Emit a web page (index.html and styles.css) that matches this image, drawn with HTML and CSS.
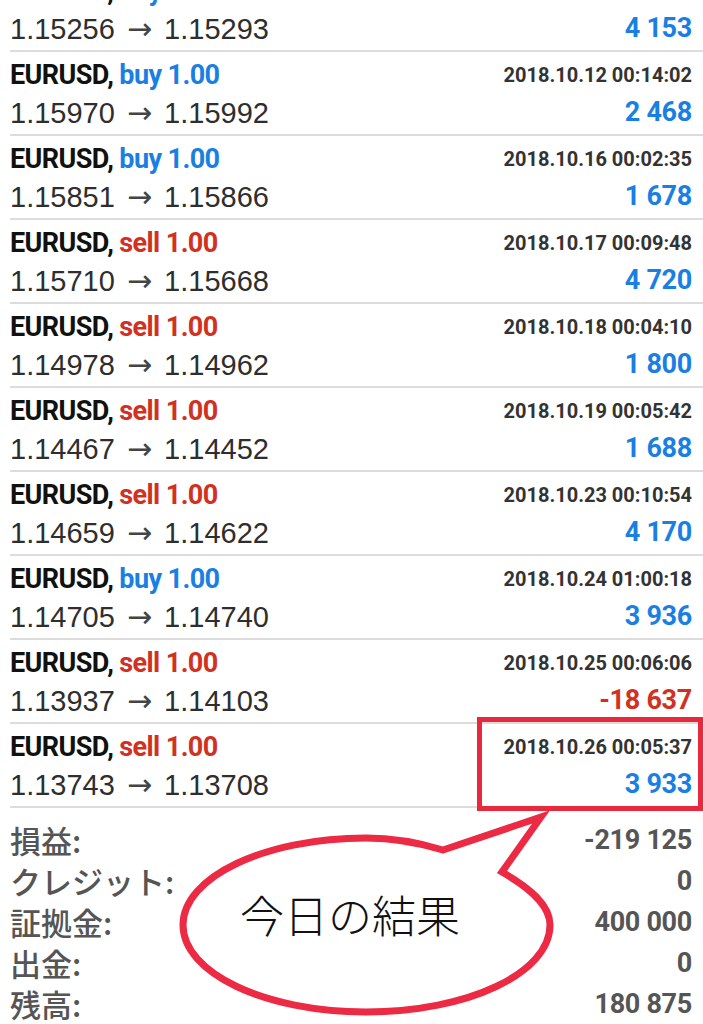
FILE: index.html
```html
<!DOCTYPE html>
<html lang="ja">
<head>
    <meta charset="UTF-8">
    <meta name="viewport" content="width=device-width, initial-scale=1.0">
    <title>History</title>
    <link rel="stylesheet" href="styles.css">
</head>
<body>
    <main class="history">
        <div class="deals">
            <div class="deal">
                <div class="line"><span class="sym">EURUSD, <span class="buy">buy 1.00</span></span><span class="date">2018.10.11 00:10:11</span></div>
                <div class="line"><span class="price">1.15256 <span class="arrow">→</span> 1.15293</span><span class="profit">4 153</span></div>
            </div>
            <div class="deal">
                <div class="line"><span class="sym">EURUSD, <span class="buy">buy 1.00</span></span><span class="date">2018.10.12 00:14:02</span></div>
                <div class="line"><span class="price">1.15970 <span class="arrow">→</span> 1.15992</span><span class="profit">2 468</span></div>
            </div>
            <div class="deal">
                <div class="line"><span class="sym">EURUSD, <span class="buy">buy 1.00</span></span><span class="date">2018.10.16 00:02:35</span></div>
                <div class="line"><span class="price">1.15851 <span class="arrow">→</span> 1.15866</span><span class="profit">1 678</span></div>
            </div>
            <div class="deal">
                <div class="line"><span class="sym">EURUSD, <span class="sell">sell 1.00</span></span><span class="date">2018.10.17 00:09:48</span></div>
                <div class="line"><span class="price">1.15710 <span class="arrow">→</span> 1.15668</span><span class="profit">4 720</span></div>
            </div>
            <div class="deal">
                <div class="line"><span class="sym">EURUSD, <span class="sell">sell 1.00</span></span><span class="date">2018.10.18 00:04:10</span></div>
                <div class="line"><span class="price">1.14978 <span class="arrow">→</span> 1.14962</span><span class="profit">1 800</span></div>
            </div>
            <div class="deal">
                <div class="line"><span class="sym">EURUSD, <span class="sell">sell 1.00</span></span><span class="date">2018.10.19 00:05:42</span></div>
                <div class="line"><span class="price">1.14467 <span class="arrow">→</span> 1.14452</span><span class="profit">1 688</span></div>
            </div>
            <div class="deal">
                <div class="line"><span class="sym">EURUSD, <span class="sell">sell 1.00</span></span><span class="date">2018.10.23 00:10:54</span></div>
                <div class="line"><span class="price">1.14659 <span class="arrow">→</span> 1.14622</span><span class="profit">4 170</span></div>
            </div>
            <div class="deal">
                <div class="line"><span class="sym">EURUSD, <span class="buy">buy 1.00</span></span><span class="date">2018.10.24 01:00:18</span></div>
                <div class="line"><span class="price">1.14705 <span class="arrow">→</span> 1.14740</span><span class="profit">3 936</span></div>
            </div>
            <div class="deal">
                <div class="line"><span class="sym">EURUSD, <span class="sell">sell 1.00</span></span><span class="date">2018.10.25 00:06:06</span></div>
                <div class="line"><span class="price">1.13937 <span class="arrow">→</span> 1.14103</span><span class="profit loss">-18 637</span></div>
            </div>
            <div class="deal">
                <div class="line"><span class="sym">EURUSD, <span class="sell">sell 1.00</span></span><span class="date">2018.10.26 00:05:37</span></div>
                <div class="line"><span class="price">1.13743 <span class="arrow">→</span> 1.13708</span><span class="profit">3 933</span></div>
            </div>
        </div>

        <div class="summary">
            <div class="sum-row"><span class="label">損益:</span><span class="num">-219 125</span></div>
            <div class="sum-row"><span class="label">クレジット:</span><span class="num">0</span></div>
            <div class="sum-row"><span class="label">証拠金:</span><span class="num">400 000</span></div>
            <div class="sum-row"><span class="label">出金:</span><span class="num">0</span></div>
            <div class="sum-row"><span class="label">残高:</span><span class="num">180 875</span></div>
        </div>

        <!-- hand-drawn annotation on top of the screenshot -->
        <div class="mark-box"></div>
        <div class="bubble">
            <svg width="703" height="1024" viewBox="0 0 703 1024" xmlns="http://www.w3.org/2000/svg">
                <path d="M443 850 L541 817 L502 872 C530 888 550 905 550 925 C550 973 468 1012 366 1012 C265 1012 183 973 183 925 C183 877 265 838 366 838 C395 838 420 843 443 850 Z"
                      fill="#ffffff" stroke="#ec2a43" stroke-width="7" stroke-linejoin="miter"/>
            </svg>
            <span class="bubble-text">今日の結果</span>
        </div>
    </main>
</body>
</html>
```

FILE: styles.css
```css
body, div, span {
    margin: 0;
    padding: 0;
}
body {
    font-family: 'Roboto', 'Noto Sans CJK JP', sans-serif;
    background-color: #ffffff;
    color: #333333;
    overflow: hidden;
}
.history {
    position: relative;
    width: 703px;
    height: 1024px;
    overflow: hidden;
}
.deals {
    margin-top: -32px;
}
.deal {
    margin-left: 10px;
    padding: 5px 11px 3px 0;
    height: 74px;
    border-bottom: 2px solid #dcdcdc;
}
.line {
    display: flex;
    justify-content: space-between;
    align-items: center;
}
.line:first-child {
    height: 36px;
}
.line:last-child {
    height: 38px;
}
.sym {
    font-weight: bold;
    font-size: 27px;
    color: #111111;
    letter-spacing: -0.6px;
}
.buy {
    color: #1a7fe3;
}
.sell {
    color: #d2311f;
}
.date {
    font-weight: bold;
    font-size: 20px;
    color: #333333;
}
.price {
    font-family: 'Liberation Sans', 'Noto Sans CJK JP', sans-serif;
    font-size: 29px;
    color: #2e2e2e;
}
.arrow {
    font-family: 'DejaVu Sans', sans-serif;
    font-size: 30px;
    margin: 0 4px;
    color: #444444;
}
.profit {
    font-weight: bold;
    font-size: 27px;
    color: #1a7fe3;
    letter-spacing: -0.3px;
}
.profit.loss {
    color: #d2311f;
}
.summary {
    margin-left: 10px;
    padding: 11px 11px 0 0;
}
.sum-row {
    display: flex;
    justify-content: space-between;
    align-items: center;
    height: 41px;
    color: #555555;
}
.label {
    font-family: 'Noto Sans CJK JP', sans-serif;
    font-weight: 500;
    font-size: 31px;
    line-height: 41px;
}
.num {
    font-size: 27px;
    font-weight: bold;
    letter-spacing: -0.3px;
}
.mark-box {
    position: absolute;
    left: 477px;
    top: 717px;
    width: 216px;
    height: 84px;
    border: 5px solid #e8283c;
}
.bubble {
    position: absolute;
    left: 0;
    top: 0;
    width: 703px;
    height: 1024px;
}
.bubble svg {
    position: absolute;
    left: 0;
    top: 0;
}
.bubble-text {
    position: absolute;
    left: 240px;
    top: 892px;
    font-family: 'Noto Sans CJK JP', sans-serif;
    font-weight: 300;
    font-size: 44px;
    line-height: 1;
    color: #111111;
}
```
